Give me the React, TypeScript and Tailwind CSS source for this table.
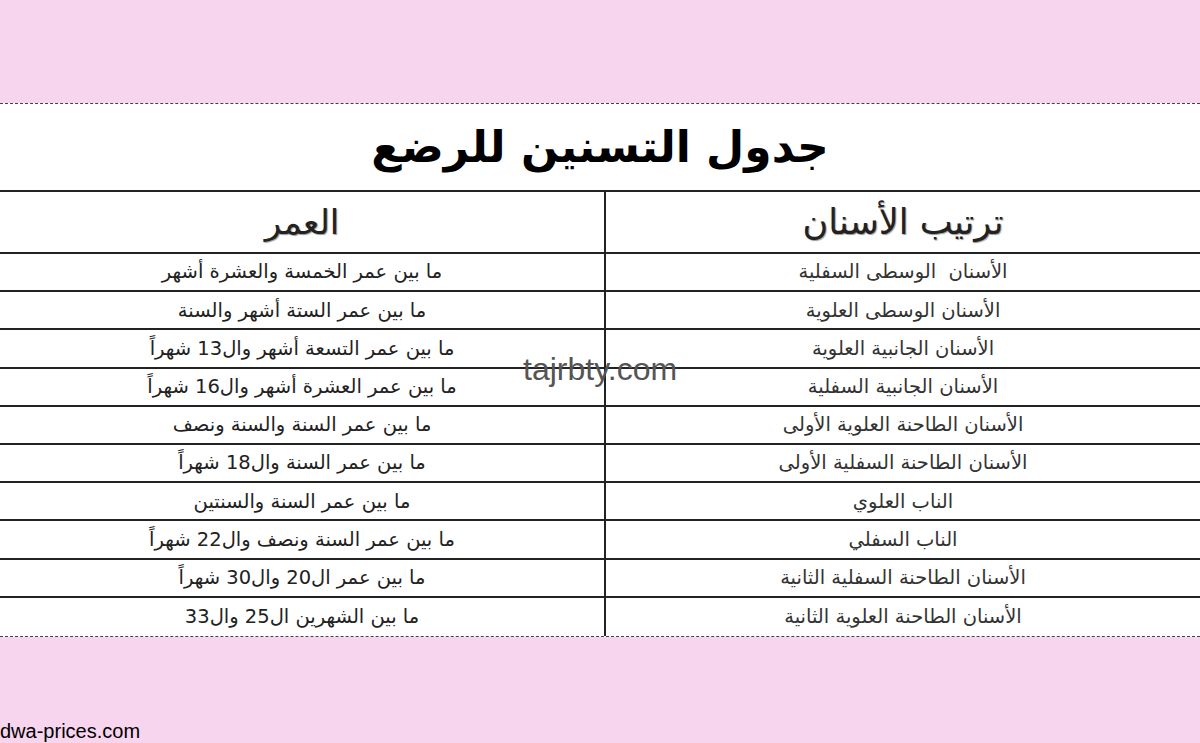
const rows: [string, string][] = [
  ['الأسنان  الوسطى السفلية', 'ما بين عمر الخمسة والعشرة أشهر'],
  ['الأسنان الوسطى العلوية', 'ما بين عمر الستة أشهر والسنة'],
  ['الأسنان الجانبية العلوية', 'ما بين عمر التسعة أشهر وال13 شهراً'],
  ['الأسنان الجانبية السفلية', 'ما بين عمر العشرة أشهر وال16 شهراً'],
  ['الأسنان الطاحنة العلوية الأولى', 'ما بين عمر السنة والسنة ونصف'],
  ['الأسنان الطاحنة السفلية الأولى', 'ما بين عمر السنة وال18 شهراً'],
  ['الناب العلوي', 'ما بين عمر السنة والسنتين'],
  ['الناب السفلي', 'ما بين عمر السنة ونصف وال22 شهراً'],
  ['الأسنان الطاحنة السفلية الثانية', 'ما بين عمر ال20 وال30 شهراً'],
  ['الأسنان الطاحنة العلوية الثانية', 'ما بين الشهرين ال25 وال33'],
];

const App = () => {
  return (
    <div className="relative w-full h-[743px] bg-[#f7d5ee] font-['DejaVu_Sans',sans-serif] overflow-hidden">
      <div className="h-[103px]" />
      <div className="bg-white border-t border-b border-dashed border-[#444]">
        {/* Title */}
        <div className="h-[86px] flex items-center justify-center">
          <h1 dir="rtl" className="text-[44px] font-bold text-black leading-none">جدول التسنين للرضع</h1>
        </div>

        {/* Table */}
        <div dir="rtl" className="border-t-2 border-[#222]">
          <div className="grid grid-cols-[596px_1fr] h-[62px] border-b-2 border-[#222]">
            <div className="flex items-center justify-center border-l-2 border-[#222] text-[35px] text-[#222] [text-shadow:1px_1px_1px_#999]">
              ترتيب الأسنان
            </div>
            <div className="flex items-center justify-center text-[34px] text-[#222] [text-shadow:1px_1px_1px_#999]">
              العمر
            </div>
          </div>
          {rows.map(([tooth, age], i) => (
            <div
              key={i}
              className={`grid grid-cols-[596px_1fr] h-[38.2px] ${i < rows.length - 1 ? 'border-b-2 border-[#222]' : ''}`}
            >
              <div className="flex items-center justify-center border-l-2 border-[#222] text-[19.5px] text-[#333] whitespace-pre">
                {tooth}
              </div>
              <div className="flex items-center justify-center text-[19.5px] text-[#222]">
                {age}
              </div>
            </div>
          ))}
        </div>
      </div>

      {/* Watermarks */}
      <div className="absolute left-[523px] top-[353px] text-[32px] text-[#555] font-['Liberation_Sans',sans-serif] leading-none">
        tajrbty.com
      </div>
      <div className="absolute left-0 bottom-[2px] text-[20px] text-black font-['Liberation_Sans',sans-serif] leading-none">
        dwa-prices.com
      </div>
    </div>
  );
};

export default App;
